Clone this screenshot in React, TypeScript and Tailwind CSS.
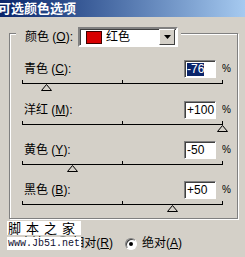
const font = { fontFamily: '"Liberation Sans", "Noto Sans CJK SC", sans-serif' };

type Row = { name: string; key: string; value: number; selected?: boolean };

const rows: Row[] = [
  { name: "青色", key: "C", value: -76, selected: true },
  { name: "洋红", key: "M", value: 100 },
  { name: "黄色", key: "Y", value: -50 },
  { name: "黑色", key: "B", value: 50 },
];

function fmt(v: number) {
  return v > 0 ? `+${v}` : `${v}`;
}

function Label({ name, k }: { name: string; k: string }) {
  return (
    <span className="text-[12px] leading-none text-black whitespace-nowrap">
      {name} (<span className="underline">{k}</span>):
    </span>
  );
}

function Slider({ value, first }: { value: number; first?: boolean }) {
  return (
    <div className={`relative ml-[12px] w-[201px] ${first ? "h-[23px]" : "h-[22px]"}`}>
      <div className="absolute left-0 right-0 top-[5px] h-px bg-black" />
      <div className="absolute left-0 top-[2px] h-[4px] w-px bg-black" />
      <div className="absolute left-[100px] top-[2px] h-[4px] w-px bg-black" />
      <div className="absolute right-0 top-[2px] h-[4px] w-px bg-black" />
      <svg
        width="11"
        height="7"
        className="absolute top-[6px]"
        style={{ left: 100 + value - 5 }}
      >
        <polygon points="5.5,0.5 10.5,6.5 0.5,6.5" fill="#d4d0c8" stroke="#000" strokeWidth="1" />
      </svg>
    </div>
  );
}

function Radio({ checked }: { checked?: boolean }) {
  return (
    <span className="relative inline-flex h-[12px] w-[12px] items-center justify-center rounded-full border border-t-[#808080] border-l-[#808080] border-b-white border-r-white bg-white shadow-[inset_1px_1px_0_#404040]">
      {checked && <span className="h-[4px] w-[4px] rounded-full bg-black" />}
    </span>
  );
}

export default function App() {
  return (
    <div className="relative h-[257px] w-[245px] overflow-hidden bg-[#d4d0c8]" style={font}>
      <div className="flex h-[17px] items-center bg-gradient-to-r from-[#0a246a] to-[#a6caf0]">
        <span className="-ml-[2px] text-[13px] font-bold leading-none text-white">可选颜色选项</span>
      </div>

      <div className="ml-[9px] mt-[16px] h-[186px] w-[229px] border border-[#808080] shadow-[inset_1px_1px_0_#fff,1px_1px_0_#fff]">
        <div className="-mt-[7px] ml-[6px] flex w-fit items-center bg-[#d4d0c8] pl-[9px] pr-[3px]">
          <Label name="颜色" k="O" />
          <div className="ml-[5px] flex h-[20px] w-[100px] items-center border-2 border-t-[#808080] border-l-[#808080] border-b-white border-r-white bg-white shadow-[inset_1px_1px_0_#404040]">
            <span className="ml-[6px] h-[13px] w-[16px] border border-[#400000] bg-[#d80000]" />
            <span className="ml-[4px] text-[12px] leading-none text-black">红色</span>
            <span className="ml-auto mr-[1px] flex h-[16px] w-[16px] items-center justify-center border border-t-white border-l-white border-b-[#404040] border-r-[#404040] bg-[#d4d0c8]">
              <svg width="7" height="4">
                <polygon points="0,0 7,0 3.5,4" fill="#000" />
              </svg>
            </span>
          </div>
        </div>

        <div className="mt-[13px] flex flex-col">
          {rows.map((r, i) => (
            <div key={r.key}>
              <div className="flex h-[18px] items-center pl-[14px] pr-[6px]">
                <Label name={r.name} k={r.key} />
                <div className="ml-auto flex h-[18px] w-[32px] items-center border border-t-[#808080] border-l-[#808080] border-b-white border-r-white bg-white shadow-[inset_1px_1px_0_#404040]">
                  <span
                    className={`ml-[2px] text-[12px] leading-[13px] ${
                      r.selected ? "bg-[#0a246a] text-white" : "text-black"
                    }`}
                  >
                    {fmt(r.value)}
                  </span>
                </div>
                <span className="ml-[6px] text-[10px] leading-none text-black">%</span>
              </div>
              <Slider value={r.value} first={i === 0} />
            </div>
          ))}
        </div>
      </div>

      <div className="ml-[20px] mt-[17px] flex items-center text-[12px] leading-none text-black">
        <span>方法:</span>
        <span className="ml-[10px]">
          <Radio />
        </span>
        <span className="ml-[3px]">
          相对(<span className="underline">R</span>)
        </span>
        <span className="ml-[12px]">
          <Radio checked />
        </span>
        <span className="ml-[5px]">
          绝对(<span className="underline">A</span>)
        </span>
      </div>

      <div className="absolute left-[7px] top-[221px] flex flex-col items-start gap-[2px]">
        <span
          className="bg-white px-[1px] text-[13px] leading-[14px] tracking-[5px] text-black"
          style={{ fontFamily: '"Noto Sans CJK SC", sans-serif' }}
        >
          脚本之家
        </span>
        <span
          className="bg-white px-[1px] text-[10px] leading-[13px] text-[#101030]"
          style={{ fontFamily: '"Liberation Mono", monospace' }}
        >
          www.Jb51.net
        </span>
      </div>
    </div>
  );
}
